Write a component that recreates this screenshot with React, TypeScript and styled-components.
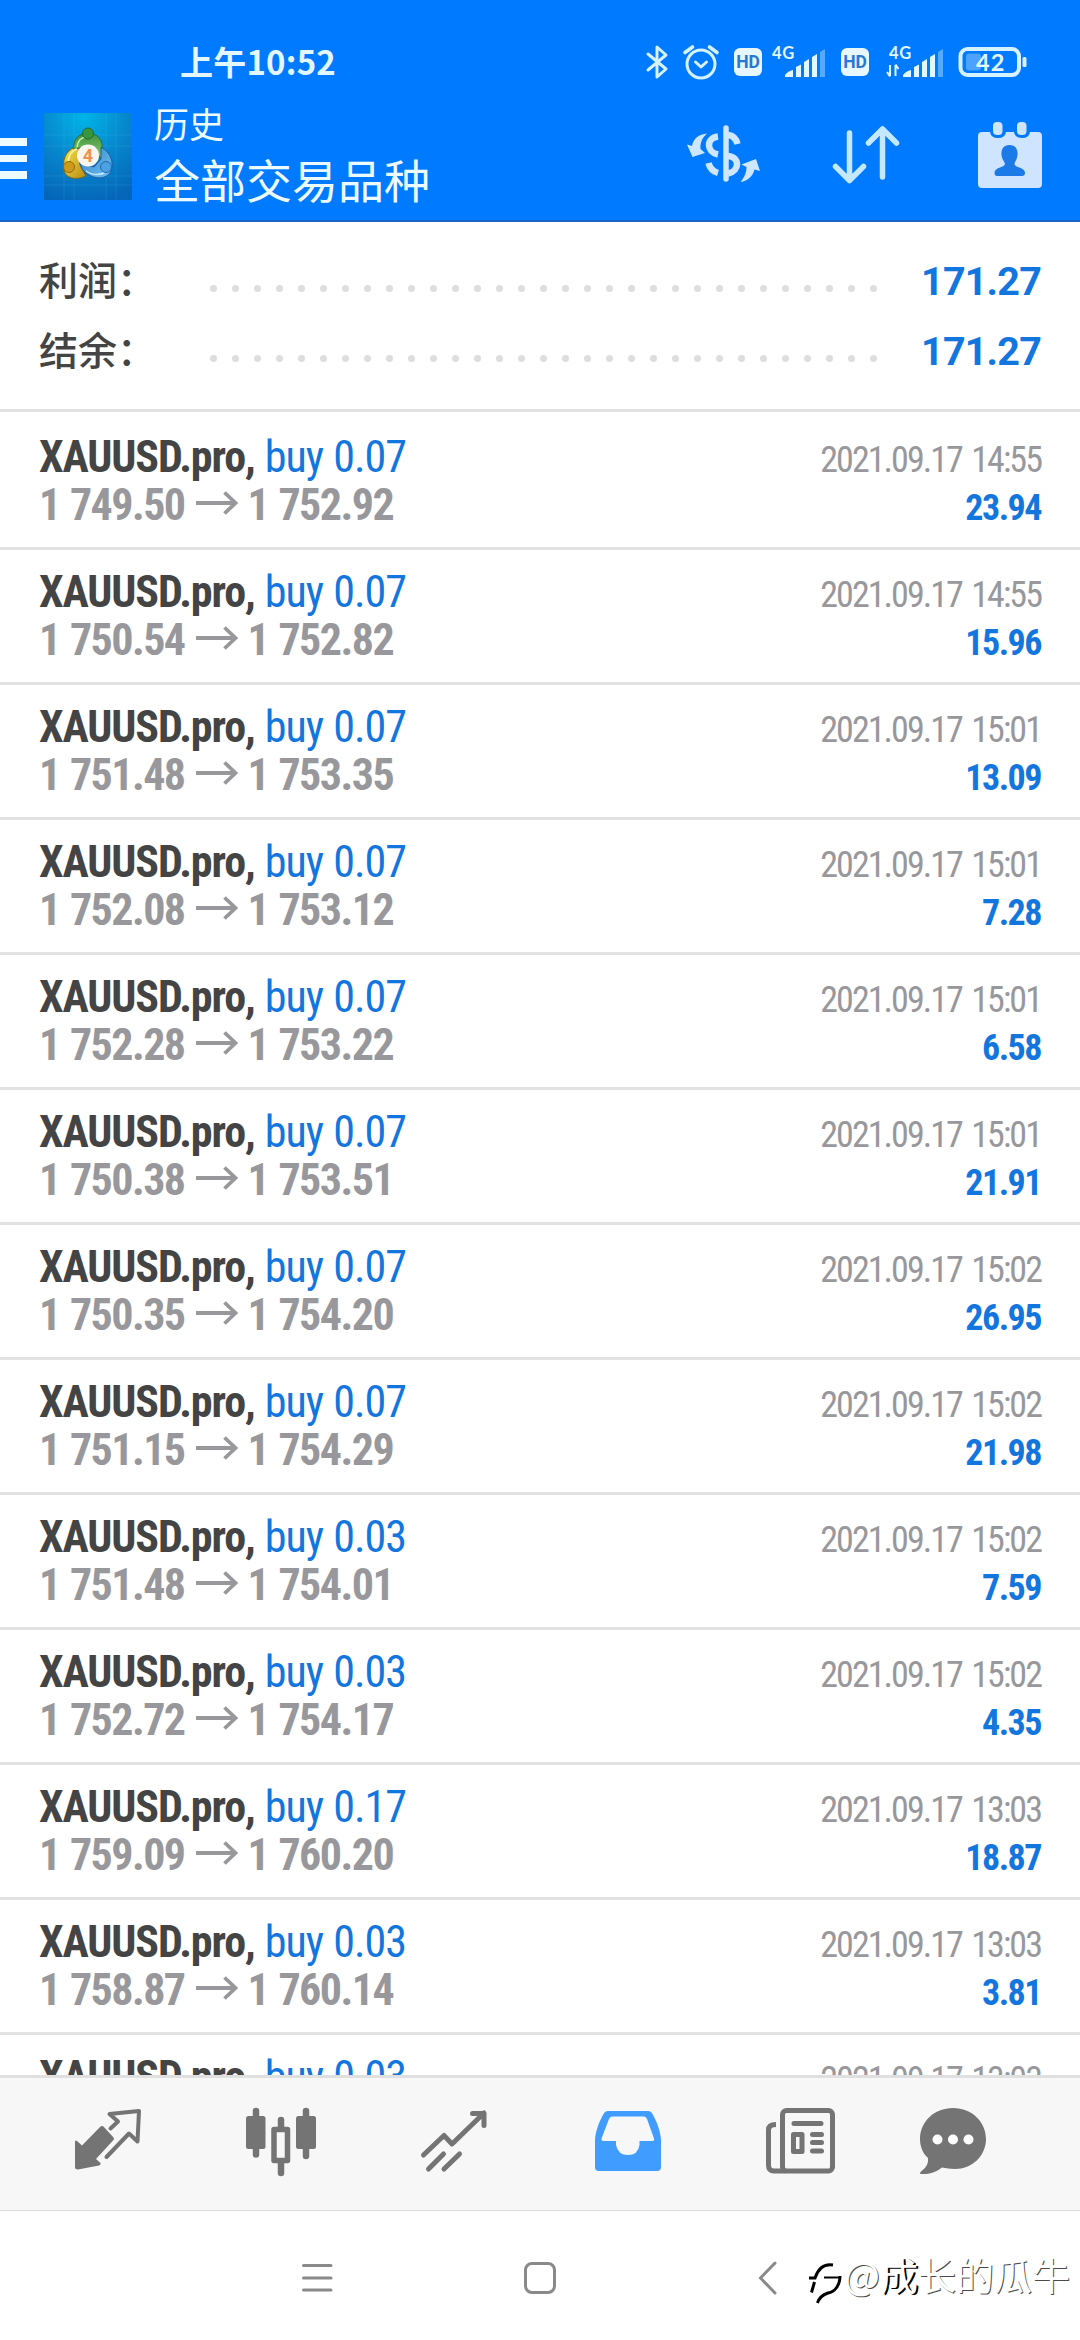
import React from 'react';
import styled, { createGlobalStyle } from 'styled-components';

const cjk = `'Noto Sans CJK SC', 'Noto Sans', sans-serif`;
const latin = `Roboto, 'Noto Sans CJK SC', sans-serif`;
const condensed = `'Roboto Condensed', Roboto, sans-serif`;

const GlobalStyle = createGlobalStyle`
  * { box-sizing: border-box; }
  body { margin: 0; background: #fff; }
  svg { display: block; flex: none; overflow: visible; }
`;

const Screen = styled.div`
  width: 1080px;
  height: 2340px;
  display: flex;
  flex-direction: column;
  overflow: hidden;
  background: #fff;
`;

const Header = styled.header`
  height: 222px;
  flex: none;
  background: #007aff;
  border-bottom: 2px solid #1a66cc;
  color: #ecfbff;
`;

const StatusBar = styled.div`
  height: 100px;
  padding: 38px 52px 0 180px;
  display: flex;
  justify-content: space-between;
`;

const Clock = styled.div`
  font: 700 33px/46px ${cjk};
  letter-spacing: 0.2px;
  color: #e2f7ff;
`;

const StatusIcons = styled.div`
  display: flex;
  align-items: center;
  height: 48px;
`;

const Badge = styled.div`
  width: 28px;
  height: 28px;
  border-radius: 6px;
  background: #e6f7ff;
  color: #2a78d0;
  font: 700 17.5px/29px ${latin};
  text-align: center;
`;

const Spacer = styled.div<{ $w: number }>`
  width: ${(p) => p.$w}px;
  flex: none;
`;

const TitleBar = styled.div`
  height: 120px;
  display: flex;
`;

const Burger = styled.div`
  width: 27px;
  margin: 38px 17px 0 0;
  display: flex;
  flex-direction: column;
  gap: 9px;
`;

const BurgerLine = styled.i`
  height: 7.5px;
  background: #ecfbff;
`;

const LogoBox = styled.div`
  margin: 13px 22px 0 0;
`;

const Titles = styled.div`
  flex: 1;
  font-family: ${cjk};
  padding-top: 1px;
`;

const Section = styled.div`
  font-size: 35px;
  line-height: 44px;
`;

const Title = styled.div`
  font-size: 46px;
  line-height: 66px;
`;

const Actions = styled.div`
  display: flex;
  padding: 21px 38px 0 0;
`;

const Action = styled.div<{ $drop?: number }>`
  padding-top: ${(p) => p.$drop ?? 0}px;
`;

const Summary = styled.section`
  height: 190px;
  flex: none;
  padding: 25px 39px 0 39px;
  border-bottom: 3px solid #e2e2e2;
`;

const SummaryRow = styled.div`
  height: 70px;
  display: flex;
  align-items: flex-start;
`;

const SummaryLabel = styled.div`
  width: 171px;
  font: 500 39px/62px ${cjk};
  color: #444;
`;

const Dots = styled.div`
  display: flex;
  gap: 15px;
  padding-top: 38px;
`;

const Dot = styled.i`
  width: 7px;
  height: 7px;
  border-radius: 50%;
  background: #dedede;
`;

const SummaryValue = styled.div`
  flex: 1;
  text-align: right;
  font: 700 39.5px/70px ${latin};
  letter-spacing: -0.8px;
  color: #1276de;
`;

const List = styled.main`
  height: 1663px;
  flex: none;
  padding-top: 3px;
  overflow: hidden;
`;

const Deal = styled.article`
  height: 135px;
  padding: 18px 38px 0 39px;
  border-bottom: 3px solid #e2e2e2;
`;

const Line = styled.div`
  height: 48px;
  display: flex;
  align-items: baseline;
  justify-content: space-between;
  font: 400 44px/48px ${condensed};
  font-stretch: 75%;
  white-space: pre;
`;

const Symbol = styled.b`
  font-weight: 700;
  letter-spacing: -1.1px;
  color: #444;
`;

const Side = styled.span`
  letter-spacing: -1px;
  word-spacing: 1px;
  color: #1276de;
`;

const Prices = styled.b`
  letter-spacing: -1.55px;
  word-spacing: 1.6px;
  color: #98989c;
`;

const When = styled.span`
  font-size: 36px;
  letter-spacing: -1.95px;
  word-spacing: 3px;
  margin-right: 1px;
  color: #98989c;
`;

const Profit = styled.b`
  font-size: 36px;
  letter-spacing: -1.5px;
  margin-right: 1px;
  color: #1276de;
`;

const PriceArrow = styled.svg`
  && {
    display: inline-block;
    margin: 0 10px 0 11px;
    vertical-align: 5px;
  }
`;

const TabBar = styled.nav`
  height: 136px;
  flex: none;
  display: flex;
  padding-left: 21px;
  background: #f7f7f7;
  border-top: 3px solid #e0e0e0;
  border-bottom: 1px solid #dcdcdc;
`;

const Tab = styled.div<{ $w?: number }>`
  width: ${(p) => p.$w ?? 173.3}px;
  display: flex;
  justify-content: center;
  padding-top: 30px;
`;

const SystemNav = styled.footer`
  flex: 1;
  display: flex;
  align-items: flex-start;
  padding: 47px 0 0 301px;
`;

const Watermark = styled.div`
  display: flex;
  font: 400 38px/44px ${cjk};
  color: #fff;
  text-shadow: 1px 1px 0 #4a4a4a;
  margin-top: -6px;
  white-space: nowrap;
`;

const WatermarkBold = styled.span`
  text-shadow: 2px 1px 0 #000;
`;

const Bluetooth = () => (
  <svg width="22" height="36" viewBox="0 0 22 36" fill="none" stroke="#d4f2ff" strokeWidth="3" strokeLinejoin="round" strokeLinecap="round">
    <path d="M2 10 L20 25 L11 33 V3 L20 11 L2 26" />
  </svg>
);

const Alarm = () => (
  <svg width="36" height="36" viewBox="0 0 36 36" fill="none" stroke="#d4f2ff" strokeWidth="3" strokeLinecap="round" strokeLinejoin="round">
    <circle cx="18" cy="20" r="14" />
    <path d="M12.5 18 L18 23 L23.5 18" />
    <path d="M2 8.5 L9.5 3 M34 8.5 L26.5 3" strokeWidth="3.6" />
  </svg>
);

const Signal = ({ data }: { data?: boolean }) => (
  <svg width="58" height="34" viewBox="0 0 58 34" fill="#e2f7ff">
    <text x={data ? 3 : 1} y="14" fontFamily="Lato, Roboto, sans-serif" fontWeight="700" fontSize="16.5" letterSpacing="0.8">4G</text>
    {data && <path d="M4 20 V31 M4 31.5 L1 27 M9.5 31 V20 M9.5 19.5 L12.5 24" stroke="#e2f7ff" strokeWidth="2" fill="none" />}
    <g transform={data ? 'translate(3 0)' : undefined}>
      <path d="M14 32 V30 Q17 26 22 25 V32Z M25 32 V22 L30 19.5 V32Z M33 32 V17 L38 14 V32Z M41 32 V12 L46 9 V32Z" />
      <path d="M49 32 V7 L54 4 V32Z" fill="#55a9ff" />
    </g>
  </svg>
);

const Battery = () => (
  <svg width="70" height="32" viewBox="0 0 70 32">
    <rect x="2.5" y="3" width="58.5" height="26" rx="7" fill="none" stroke="#d4f2ff" strokeWidth="4" />
    <rect x="8" y="7.5" width="15" height="17" rx="3" fill="#4ba3ff" />
    <rect x="64.5" y="11" width="4" height="10" rx="1.5" fill="#d4f2ff" />
    <text x="18" y="24.5" fontFamily="Lato, Roboto, sans-serif" fontWeight="700" fontSize="23.5" fill="#e2f7ff" letterSpacing="1">42</text>
  </svg>
);

const Logo = () => (
  <svg width="88" height="87" viewBox="0 0 88 87">
    <defs>
      <radialGradient id="sky" cx="0.45" cy="0.05" r="1">
        <stop offset="0" stopColor="#00b4e8" />
        <stop offset="0.5" stopColor="#0786cc" />
        <stop offset="1" stopColor="#0565b8" />
      </radialGradient>
      <linearGradient id="green" x2="0" y2="1">
        <stop offset="0" stopColor="#3c8f3e" />
        <stop offset="1" stopColor="#8fcf72" />
      </linearGradient>
      <linearGradient id="gold" x2="1" y2="1">
        <stop offset="0" stopColor="#f7e650" />
        <stop offset="1" stopColor="#b98a12" />
      </linearGradient>
      <linearGradient id="azure" x2="1" y2="1">
        <stop offset="0" stopColor="#2f83c8" />
        <stop offset="1" stopColor="#73c0f4" />
      </linearGradient>
    </defs>
    <rect width="88" height="87" fill="url(#sky)" />
    <path d="M0 22H88M0 33H88M0 63H88M0 72H88M20 0V87M30 0V87M62 0V87M72 0V87" stroke="#5cc8ee" strokeOpacity="0.16" />
    <path d="M35 33 C24 35 18 44 20 56 C20 65 32 68 42 63 L36 52 L35 40Z" fill="url(#gold)" stroke="#77691b" />
    <path d="M30 37 C28 26 36 20 44 20 C53 20 60 27 58 38 L57 46 L49 34 H38Z" fill="url(#green)" stroke="#2d6b35" />
    <path d="M57 34 C67 39 70 50 67 58 C63 67 48 68 38 56 L36 50 L50 54 L57 46Z" fill="url(#azure)" stroke="#1e5c9b" />
    <path d="M33 34 C34 27 38 24 43 24" fill="none" stroke="#c6efae" strokeWidth="1.5" />
    <path d="M24 49 C25 41 29 37 33 36" fill="none" stroke="#fff6a0" strokeWidth="1.5" />
    <path d="M42 58 C49 63 57 62 62 59" fill="none" stroke="#c5e8ff" strokeWidth="1.5" />
    <circle cx="44" cy="20.5" r="5.5" fill="#39963f" stroke="#236b2c" />
    <circle cx="25" cy="54" r="5.5" fill="#cf9a1c" stroke="#8f6c12" />
    <circle cx="62" cy="54" r="5.5" fill="#4aa2e4" stroke="#2069aa" />
    <circle cx="44" cy="42.5" r="11" fill="#fbf5f0" />
    <text x="44" y="49" textAnchor="middle" fontFamily="Roboto, sans-serif" fontWeight="700" fontSize="18" fill="#ee9250">4</text>
  </svg>
);

const CurrencyIcon = () => (
  <svg width="74" height="60" viewBox="0 0 74 60" fill="none" stroke="#cfe6ff" strokeWidth="6.5">
    <path d="M39 5 V56" strokeLinecap="round" strokeWidth="5.5" />
    <path d="M31 13.5 C19 15 19 29 31 31.5" />
    <path d="M41 12 C46 12.5 49 15 50.5 21" />
    <path d="M41 33 C53 34 53 48 41 50.5" />
    <path d="M21.5 40 C23 46 26 48.5 31 50" />
    <path d="M20 10.5 C12 11 6 16 5 23 L0 21.5 L5.5 34 L18 30 L13.5 26 C13 20 15 15 20 10.5Z M53.5 59 C61 58 66 53 67.5 46.5 L73 48 L69 36 L54.5 41.5 L59.5 44 C59.5 50 57 55 53.5 59Z" fill="#cfe6ff" stroke="none" />
  </svg>
);

const SortIcon = () => (
  <svg width="68" height="62" viewBox="0 0 68 62" fill="none" stroke="#c4e9ff" strokeWidth="5.5" strokeLinecap="round" strokeLinejoin="round">
    <path d="M17.5 9 V56 M3.5 42.5 L17.5 56.5 L31.5 42.5 M50.5 53 V6 M36.5 19 L50.5 5 L64.5 19" />
  </svg>
);

const CalendarIcon = () => (
  <svg width="64" height="66" viewBox="0 0 64 66">
    <path d="M4 10 H12 Q13 16 20 16 Q27 16 28 10 H36 Q37 16 44 16 Q51 16 52 10 H60 Q64 10 64 14 V62 Q64 66 60 66 H4 Q0 66 0 62 V14 Q0 10 4 10Z" fill="#cfe4ff" />
    <rect x="13.5" y="-1" width="12.5" height="16" rx="5" fill="#007aff" />
    <rect x="37.5" y="-1" width="12.5" height="16" rx="5" fill="#007aff" />
    <rect x="15" y="0" width="9.5" height="13" rx="4" fill="#cfe4ff" />
    <rect x="39" y="0" width="9.5" height="13" rx="4" fill="#cfe4ff" />
    <path d="M31.5 23 C38 23 40 28 39.5 33 C39 38 37 39 36.5 42 C37 46 47 45 47 51 Q47 54 44 54 H19 Q16.5 54 16.5 51 C16.5 45 26 46 27 42 C26.5 39 24 38 23.5 33 C23 28 25 23 31.5 23Z" fill="#1c7ae8" />
  </svg>
);

const gray = '#747474';

const QuotesIcon = () => (
  <svg width="68" height="68" viewBox="0 0 68 68">
    <path d="M1 34 Q1 31.5 3 33 L8 37.5 L26.500 18.500 Q28 17.500 29.500 18.500 L39.5 29.500 Q40.5 31 39.5 32 L22 51 L26.500 55 Q27 57 25 57.5 L4 61.5 Q1 61.5 1 59Z" fill={gray} />
    <path d="M36.500 20.5 L44 13.5 L35.5 6 L65 3 L63.5 33.5 L55 25.5 L32.5 49" fill="none" stroke={gray} strokeWidth="4" strokeLinecap="round" strokeLinejoin="round" />
  </svg>
);

const ChartIcon = () => (
  <svg width="70" height="70" viewBox="0 0 70 70" fill={gray}>
    <rect x="0" y="8" width="19.5" height="33" rx="2.5" />
    <rect x="50" y="8" width="20" height="33" rx="2.5" />
    <path d="M10 3 V46.5 M60 3 V48 M35 12 V22 M35 52 V65" stroke={gray} strokeWidth="6.5" strokeLinecap="round" />
    <rect x="28" y="21.5" width="13.5" height="31" fill="#f7f7f7" stroke={gray} strokeWidth="5.5" strokeLinejoin="round" />
  </svg>
);

const TradeIcon = () => (
  <svg width="68" height="68" viewBox="0 0 68 68" fill="none" stroke={gray} strokeWidth="5" strokeLinecap="round" strokeLinejoin="round">
    <path d="M3.5 47 L24 27.5 L32 36 L64 5 M52.5 5.5 H64 V17.5 M8.5 61 L23.5 46 M24 61 L39.5 46" />
  </svg>
);

const InboxIcon = () => (
  <svg width="66" height="66" viewBox="0 0 66 66">
    <path fillRule="evenodd" d="M13 3 H53 Q56 3 57.5 6 C62 14 65.5 23 66 32 V59 Q66 63 62 63 H4 Q0 63 0 59 V32 C0.5 23 4 14 8.5 6 Q10 3 13 3Z M17 8.5 Q15 8.5 14 11 L6.5 30.5 Q6 33 8.5 33 H21 V37 Q23 47 33 47 Q43 47 44.5 37 V33 H57 Q60 33 59 30.5 L52 11 Q51 8.5 49 8.5Z" fill="#409cff" />
  </svg>
);

const NewsIcon = () => (
  <svg width="69" height="66" viewBox="0 0 69 66" fill="none" stroke={gray} strokeWidth="5" strokeLinecap="round" strokeLinejoin="round">
    <rect x="16.5" y="2.5" width="50" height="60.5" rx="4" />
    <path d="M10 16.5 Q2.5 16.5 2.5 22 V57 Q2.5 63 8 63 H20" strokeLinecap="butt" />
    <path d="M28 15.5 H55 M46.5 26.5 H55.5 M46.5 34.5 H55.5 M46.5 43 H55.5" />
    <rect x="27.5" y="26.5" width="8.5" height="17" />
  </svg>
);

const ChatIcon = () => (
  <svg width="66" height="66" viewBox="0 0 66 66">
    <path d="M33 0 C52 0 66 14 66 31 C66 48 52 61 35 61 C30 61 26 60 22 59.5 C16 64.5 8 66.5 1 66 Q-1 65.5 1 63.5 C7 59 8.5 55 8 50 C2.5 45 0 38 0 31 C0 14 14 0 33 0Z" fill={gray} />
    <circle cx="17.5" cy="31.5" r="5" fill="#fff" />
    <circle cx="33" cy="31.5" r="5" fill="#fff" />
    <circle cx="48.5" cy="31.5" r="5" fill="#fff" />
  </svg>
);

type DealData = [lot: string, open: string, close: string, time: string, profit: string];

const deals: DealData[] = [
  ['0.07', '1 749.50', '1 752.92', '14:55', '23.94'],
  ['0.07', '1 750.54', '1 752.82', '14:55', '15.96'],
  ['0.07', '1 751.48', '1 753.35', '15:01', '13.09'],
  ['0.07', '1 752.08', '1 753.12', '15:01', '7.28'],
  ['0.07', '1 752.28', '1 753.22', '15:01', '6.58'],
  ['0.07', '1 750.38', '1 753.51', '15:01', '21.91'],
  ['0.07', '1 750.35', '1 754.20', '15:02', '26.95'],
  ['0.07', '1 751.15', '1 754.29', '15:02', '21.98'],
  ['0.03', '1 751.48', '1 754.01', '15:02', '7.59'],
  ['0.03', '1 752.72', '1 754.17', '15:02', '4.35'],
  ['0.17', '1 759.09', '1 760.20', '13:03', '18.87'],
  ['0.03', '1 758.87', '1 760.14', '13:03', '3.81'],
];

const DealHead = ({ lot, time }: { lot: string; time: string }) => (
  <Line>
    <span><Symbol>XAUUSD.pro,</Symbol> <Side>buy {lot}</Side></span>
    <When>2021.09.17 {time}</When>
  </Line>
);

const DealRow = ({ deal: [lot, open, close, time, profit] }: { deal: DealData }) => (
  <Deal>
    <DealHead lot={lot} time={time} />
    <Line>
      <Prices>
        {open}
        <PriceArrow width="42" height="24" viewBox="0 0 42 24" fill="none" stroke="#98989c" strokeWidth="3.8">
          <path d="M0 12 H40 M28.5 1.5 L39.5 12 L28.5 22.5" />
        </PriceArrow>
        {close}
      </Prices>
      <Profit>{profit}</Profit>
    </Line>
  </Deal>
);

const SummaryItem = ({ label, value }: { label: string; value: string }) => (
  <SummaryRow>
    <SummaryLabel>{label}</SummaryLabel>
    <Dots>{Array.from({ length: 31 }, (_, i) => <Dot key={i} />)}</Dots>
    <SummaryValue>{value}</SummaryValue>
  </SummaryRow>
);

export default function App() {
  return (
    <Screen>
      <GlobalStyle />
      <Header>
        <StatusBar>
          <Clock>上午10:52</Clock>
          <StatusIcons>
            <Bluetooth />
            <Spacer $w={15} />
            <Alarm />
            <Spacer $w={15} />
            <Badge>HD</Badge>
            <Spacer $w={9} />
            <Signal />
            <Spacer $w={12} />
            <Badge>HD</Badge>
            <Spacer $w={17} />
            <Signal data />
            <Spacer $w={14} />
            <Battery />
          </StatusIcons>
        </StatusBar>
        <TitleBar>
          <Burger><BurgerLine /><BurgerLine /><BurgerLine /></Burger>
          <LogoBox><Logo /></LogoBox>
          <Titles>
            <Section>历史</Section>
            <Title>全部交易品种</Title>
          </Titles>
          <Actions>
            <Action $drop={2}><CurrencyIcon /></Action>
            <Spacer $w={71} />
            <Action $drop={3}><SortIcon /></Action>
            <Spacer $w={78} />
            <Action $drop={1}><CalendarIcon /></Action>
          </Actions>
        </TitleBar>
      </Header>
      <Summary>
        <SummaryItem label="利润：" value="171.27" />
        <SummaryItem label="结余：" value="171.27" />
      </Summary>
      <List>
        {deals.map((d, i) => <DealRow key={i} deal={d} />)}
        <Deal><DealHead lot="0.03" time="13:03" /></Deal>
      </List>
      <TabBar>
        <Tab><QuotesIcon /></Tab>
        <Tab><ChartIcon /></Tab>
        <Tab><TradeIcon /></Tab>
        <Tab><InboxIcon /></Tab>
        <Tab><NewsIcon /></Tab>
        <Tab $w={131}><ChatIcon /></Tab>
      </TabBar>
      <SystemNav>
        <svg width="32" height="40" viewBox="0 0 32 40" stroke="#8a8a8a" strokeWidth="3" strokeLinecap="round">
          <path d="M2.5 7.5 H30 M2.5 20 H30 M2.5 32 H30" />
        </svg>
        <Spacer $w={190} />
        <svg width="34" height="40" viewBox="0 0 34 40" fill="none" stroke="#8a8a8a" strokeWidth="3">
          <rect x="2.5" y="5.5" width="29" height="29" rx="6.5" />
        </svg>
        <Spacer $w={200} />
        <svg width="22" height="40" viewBox="0 0 22 40" fill="none" stroke="#8a8a8a" strokeWidth="3" strokeLinecap="round">
          <path d="M18 5 L3.5 20 L18 35" />
        </svg>
        <Spacer $w={30} />
        <svg width="34" height="48" viewBox="0 0 34 48" fill="none" stroke="#000">
          <path d="M0 20 H6 C9 11 15 5.5 24 7" strokeWidth="3" />
          <path d="M15 19.5 H30" strokeWidth="2" />
          <path d="M5.5 24 L2.5 34.5 M31 18 C31 27 26 34 19 35 C13 37 10 40 8.5 45" strokeWidth="3" />
        </svg>
        <Spacer $w={1} />
        <Watermark>@<WatermarkBold>成</WatermarkBold>长的瓜牛</Watermark>
      </SystemNav>
    </Screen>
  );
}
